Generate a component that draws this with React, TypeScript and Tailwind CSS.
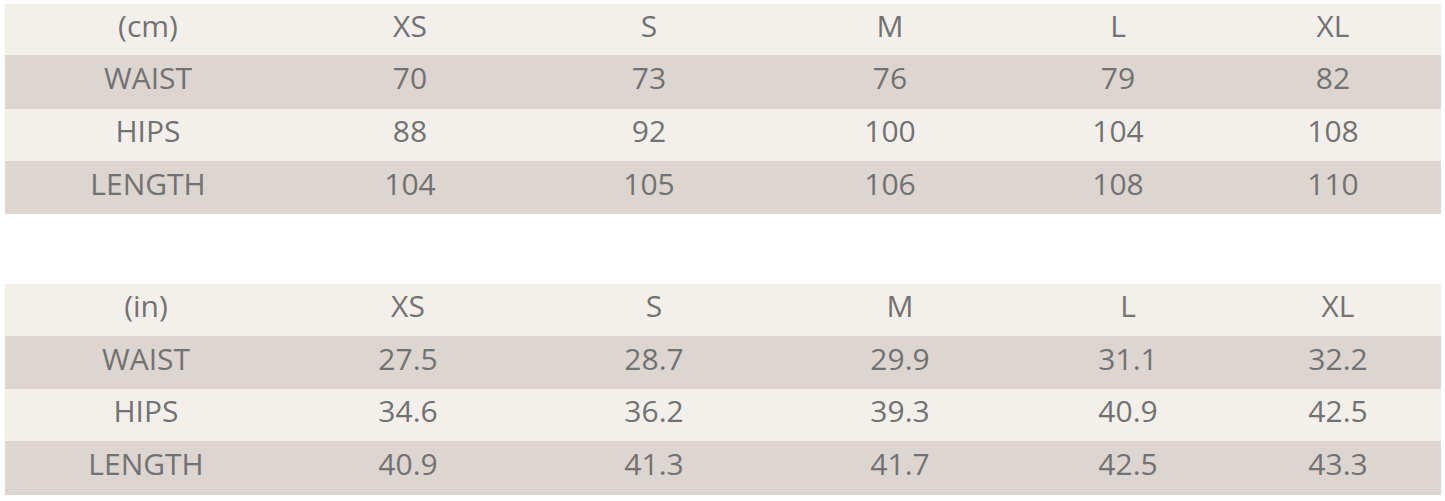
import React from "react";

type Row = { label: string; vals: string[]; dark: boolean; h: string };

const t1: Row[] = [
  { label: "(cm)", vals: ["XS", "S", "M", "L", "XL"], dark: false, h: "h-[51px]" },
  { label: "WAIST", vals: ["70", "73", "76", "79", "82"], dark: true, h: "h-[54px]" },
  { label: "HIPS", vals: ["88", "92", "100", "104", "108"], dark: false, h: "h-[52px]" },
  { label: "LENGTH", vals: ["104", "105", "106", "108", "110"], dark: true, h: "h-[53px]" },
];

const t2: Row[] = [
  { label: "(in)", vals: ["XS", "S", "M", "L", "XL"], dark: false, h: "h-[52px]" },
  { label: "WAIST", vals: ["27.5", "28.7", "29.9", "31.1", "32.2"], dark: true, h: "h-[53px]" },
  { label: "HIPS", vals: ["34.6", "36.2", "39.3", "40.9", "42.5"], dark: false, h: "h-[52px]" },
  { label: "LENGTH", vals: ["40.9", "41.3", "41.7", "42.5", "43.3"], dark: true, h: "h-[54px]" },
];

function Table({ rows, cols }: { rows: Row[]; cols: string }) {
  return (
    <div className="flex flex-col">
      {rows.map((r, i) => (
        <div
          key={i}
          className={`grid ${cols} ${r.h} ${r.dark ? "bg-[#ddd5cf]" : "bg-[#f3f0ec]"}`}
        >
          {[r.label, ...r.vals].map((c, j) => (
            <div key={j} className="flex items-center justify-center pb-[8px]">
              {c}
            </div>
          ))}
        </div>
      ))}
    </div>
  );
}

export default function App() {
  return (
    <div
      className="w-[1445px] h-[501px] bg-white pl-[5px] pr-[4px] pt-[4px] text-[#727272] text-[30px] leading-none"
      style={{ fontFamily: '"Open Sans", "Liberation Sans", sans-serif' }}
    >
      <Table rows={t1} cols="grid-cols-[286px_238px_240px_242px_214px_216px]" />
      <div className="h-[70px]" />
      <Table rows={t2} cols="grid-cols-[282px_242px_250px_242px_214px_206px]" />
    </div>
  );
}
